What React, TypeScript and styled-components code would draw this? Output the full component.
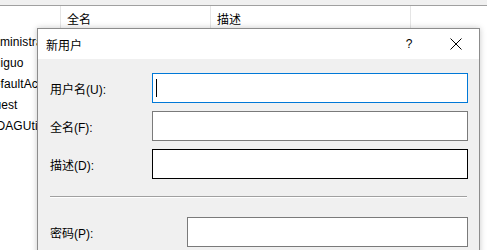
import * as React from "react";
import styled, { createGlobalStyle } from "styled-components";

const GlobalStyle = createGlobalStyle`
  html, body {
    margin: 0;
    padding: 0;
    background: #ffffff;
    overflow: hidden;
  }
  body {
    font-family: "Liberation Sans", "Noto Sans CJK SC", sans-serif;
    font-size: 12px;
    color: #000000;
  }
`;

const Screen = styled.div`
  position: relative;
  width: 487px;
  height: 250px;
  overflow: hidden;
  background: #ffffff;
`;

const TopStrip = styled.div`
  height: 5px;
  background: #f0f0f0;
  border-bottom: 1px solid #a0a0a0;
`;

const HeaderRow = styled.div`
  display: grid;
  grid-template-columns: 61px 150px 200px 1fr;
  height: 22px;
`;

const HeaderCell = styled.div<{ $last?: boolean }>`
  display: flex;
  align-items: center;
  padding: 2px 0 0 6px;
  border-right: ${(p) => (p.$last ? "none" : "1px solid #e5e5e5")};
`;

const UserList = styled.div`
  display: flex;
  flex-direction: column;
  padding-top: 4px;
`;

const UserRow = styled.div`
  height: 21px;
  line-height: 21px;
  white-space: nowrap;
  margin-left: -15px;
  letter-spacing: 0.1px;
`;

const Dialog = styled.div`
  position: absolute;
  left: 37px;
  top: 28px;
  width: 441px;
  height: 240px;
  background: #f0f0f0;
  border: 1px solid #8c8c8c;
  box-shadow: 0 0 6px rgba(0, 0, 0, 0.22);
  display: flex;
  flex-direction: column;
`;

const TitleBar = styled.div`
  height: 30px;
  background: #ffffff;
  display: flex;
  align-items: center;
  padding-left: 8px;
`;

const Title = styled.div`
  flex: 1;
`;

const HelpButton = styled.div`
  width: 14px;
  text-align: center;
  margin-right: 34px;
`;

const CloseButton = styled.div`
  width: 12px;
  height: 12px;
  margin-right: 17px;
  display: flex;
`;

const Body = styled.div`
  padding: 14px 11px 0 12px;
  display: flex;
  flex-direction: column;
`;

const FieldGrid = styled.div<{ $labelWidth: number; $inputWidth: number }>`
  display: grid;
  grid-template-columns: ${(p) => p.$labelWidth}px ${(p) => p.$inputWidth}px;
  row-gap: 8px;
`;

const Label = styled.label`
  display: flex;
  align-items: center;
  height: 30px;
`;

const Input = styled.div<{ $tone: "focus" | "idle" | "hover" }>`
  box-sizing: border-box;
  height: 30px;
  background: #ffffff;
  border: 1px solid
    ${(p) => (p.$tone === "focus" ? "#0078d7" : p.$tone === "hover" ? "#000000" : "#7a7a7a")};
  display: flex;
  align-items: center;
  padding-left: 3px;
`;

const Caret = styled.span`
  width: 1px;
  height: 18px;
  background: #000000;
`;

const Separator = styled.div`
  height: 1px;
  background: #a0a0a0;
  border-bottom: 1px solid #ffffff;
  margin: 17px 0 19px 0;
  width: 417px;
`;

const users = ["Administrator", "Huiguo", "DefaultAccount", "Guest", "WDAGUtilityAccount"];

export default function App() {
  return (
    <Screen>
      <GlobalStyle />
      <TopStrip />
      <HeaderRow>
        <HeaderCell />
        <HeaderCell>全名</HeaderCell>
        <HeaderCell>描述</HeaderCell>
        <HeaderCell $last />
      </HeaderRow>
      <UserList>
        {users.map((u) => (
          <UserRow key={u}>{u}</UserRow>
        ))}
      </UserList>

      <Dialog>
        <TitleBar>
          <Title>新用户</Title>
          <HelpButton>?</HelpButton>
          <CloseButton>
            <svg width="12" height="12" viewBox="0 0 12 12">
              <path d="M0.5 0.5 L11.5 11.5 M11.5 0.5 L0.5 11.5" stroke="#000" strokeWidth="1" fill="none" />
            </svg>
          </CloseButton>
        </TitleBar>
        <Body>
          <FieldGrid $labelWidth={102} $inputWidth={316}>
            <Label>用户名(U):</Label>
            <Input $tone="focus">
              <Caret />
            </Input>
            <Label>全名(F):</Label>
            <Input $tone="idle" />
            <Label>描述(D):</Label>
            <Input $tone="hover" />
          </FieldGrid>
          <Separator />
          <FieldGrid $labelWidth={137} $inputWidth={281}>
            <Label>密码(P):</Label>
            <Input $tone="idle" />
          </FieldGrid>
        </Body>
      </Dialog>
    </Screen>
  );
}
